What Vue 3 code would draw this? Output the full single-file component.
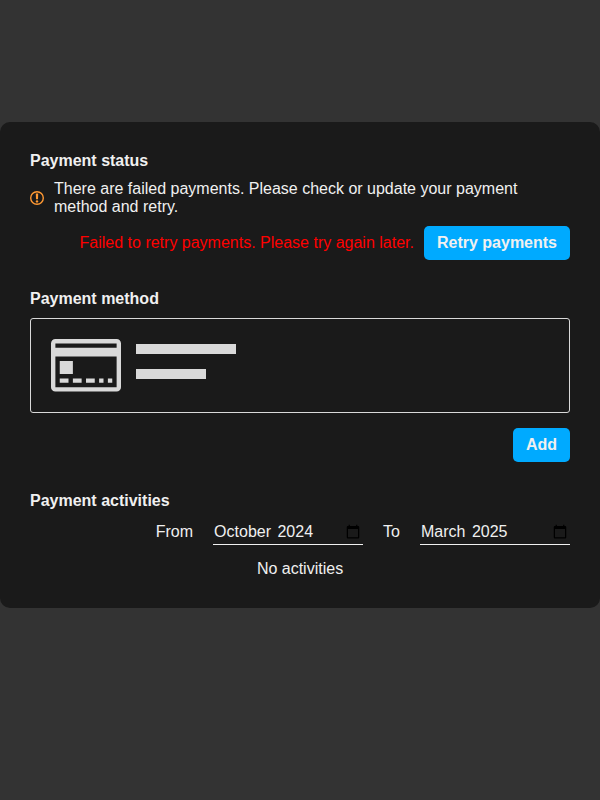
<script setup>
import { ref } from 'vue'

const from = ref('2024-10')
const to = ref('2025-03')

const names = [
  'January', 'February', 'March', 'April', 'May', 'June',
  'July', 'August', 'September', 'October', 'November', 'December',
]
const monthOf = (value) => names[Number(value.slice(5)) - 1]
const yearOf = (value) => value.slice(0, 4)
</script>

<template>
  <main class="page">
    <div class="card">
      <section class="section">
        <h2>Payment status</h2>
        <div class="notice">
          <svg class="warn" viewBox="0 0 14 14" width="14" height="14">
            <circle cx="7" cy="7" r="6.3" fill="none" stroke="currentColor" stroke-width="1.4" />
            <path d="M5.8 2.4h2.4L8 8.2H6z" fill="currentColor" />
            <circle cx="7" cy="10.4" r="1.2" fill="currentColor" />
          </svg>
          <p>There are failed payments. Please check or update your payment method and retry.</p>
        </div>
        <div class="actions">
          <span class="error">Failed to retry payments. Please try again later.</span>
          <button type="button">Retry payments</button>
        </div>
      </section>

      <section class="section">
        <h2>Payment method</h2>
        <div class="method">
          <svg class="credit" viewBox="0 0 16 12">
            <path
              fill="currentColor"
              fill-rule="evenodd"
              d="M1 0H15A1 1 0 0 1 16 1V11A1 1 0 0 1 15 12H1A1 1 0 0 1 0 11V1A1 1 0 0 1 1 0ZM1 1V2H15V1ZM1 4V11H15V4ZM2 5H5V8H2ZM2 9H4V10H2ZM5 9H7V10H5ZM8 9H10V10H8ZM11 9H12V10H11ZM13 9H14V10H13Z"
            />
          </svg>
          <div class="lines">
            <div class="line long"></div>
            <div class="line short"></div>
          </div>
        </div>
        <div class="actions add"><button type="button">Add</button></div>
      </section>

      <section class="section">
        <h2>Payment activities</h2>
        <div class="range">
          <label for="from">From</label>
          <div class="month">
            <input id="from" v-model="from" type="month" required />
            <div class="value"><span>{{ monthOf(from) }}</span> <span>{{ yearOf(from) }}</span></div>
          </div>
          <label for="to">To</label>
          <div class="month">
            <input id="to" v-model="to" type="month" required />
            <div class="value"><span>{{ monthOf(to) }}</span> <span>{{ yearOf(to) }}</span></div>
          </div>
        </div>
        <p class="empty">No activities</p>
      </section>
    </div>
  </main>
</template>

<style>
body {
  margin: 0;
  background: #333333;
}
</style>

<style scoped>
.page {
  box-sizing: border-box;
  min-height: 800px;
  padding-top: 122px;
  font-family: "Liberation Sans", Arial, sans-serif;
  font-size: 16px;
  line-height: 18px;
  color: #f0f0f0;
}
.card {
  display: flex;
  flex-direction: column;
  gap: 30px;
  padding: 30px;
  border-radius: 10px;
  background: #1a1a1a;
}
.section {
  display: flex;
  flex-direction: column;
  gap: 10px;
}
h2,
p {
  margin: 0;
  font-size: 16px;
}
.notice {
  display: flex;
  align-items: center;
  gap: 10px;
}
.warn {
  flex: none;
  color: #ff9933;
}
.actions {
  display: flex;
  justify-content: flex-end;
  align-items: center;
  gap: 10px;
}
.add {
  margin-top: 5px;
}
.error {
  color: #ff0000;
}
button {
  padding: 8px 13px;
  border: 0;
  border-radius: 5px;
  background: #00aaff;
  color: #f0f0f0;
  font: inherit;
  font-weight: 700;
}
.method {
  box-sizing: border-box;
  display: flex;
  gap: 15px;
  height: 95px;
  padding: 20px;
  border: 1px solid #d9d9d9;
  border-radius: 3px;
}
.credit {
  width: 70px;
  height: 52.5px;
  color: #d9d9d9;
}
.lines {
  display: flex;
  flex-direction: column;
  gap: 15px;
  padding-top: 5px;
}
.line {
  height: 10px;
  background: #d9d9d9;
}
.long {
  width: 100px;
}
.short {
  width: 70px;
}
.range {
  display: flex;
  justify-content: flex-end;
  align-items: flex-start;
  gap: 20px;
  height: 25px;
}
label {
  padding-top: 3px;
}
.month {
  display: grid;
  width: 150px;
}
.month > * {
  grid-area: 1 / 1;
}
input {
  box-sizing: border-box;
  width: 150px;
  height: 25px;
  padding: 0;
  border: 0;
  border-bottom: 1px solid #f0f0f0;
  outline: 0;
  background: transparent;
  color: transparent;
  font: inherit;
}
.value {
  padding-top: 3px;
  pointer-events: none;
}
.value span {
  padding: 0 1px;
}
.empty {
  margin-top: 5px;
  text-align: center;
}
</style>
